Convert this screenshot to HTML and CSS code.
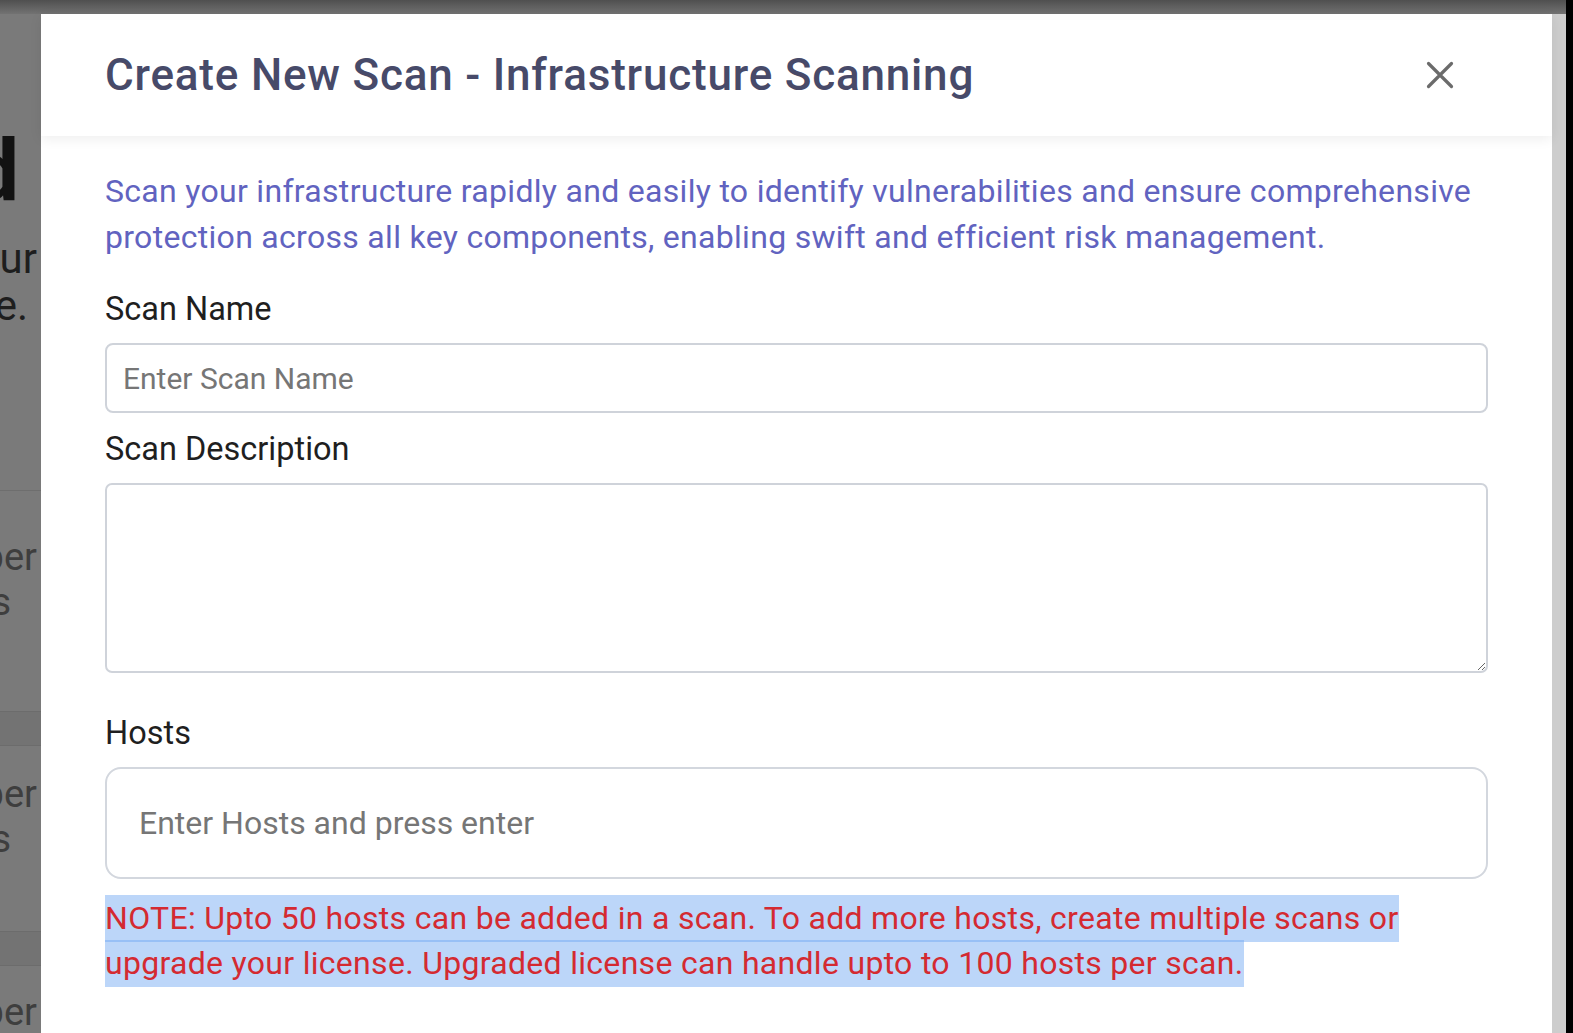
FILE: index.html
```html
<!DOCTYPE html>
<html lang="en">
<head>
<meta charset="utf-8">
<title>Create New Scan</title>
<link rel="stylesheet" href="styles.css">
</head>
<body>
<div class="screen">
  <div class="topbar"></div>
  <div class="main">
    <aside class="peek">
      <div class="peek-title"><span>Dashboard</span></div>
      <div class="peek-line peek-line-1"><span>Manage all your</span></div>
      <div class="peek-line peek-line-2"><span>scans in one place.</span></div>
      <div class="peek-spacer"></div>
      <div class="peek-row peek-row-first">
        <div class="peek-cell peek-cell-a"><span>Super</span></div>
        <div class="peek-cell peek-cell-b"><span>Hosts</span></div>
      </div>
      <div class="peek-band"></div>
      <div class="peek-row">
        <div class="peek-cell peek-cell-a"><span>Super</span></div>
        <div class="peek-cell peek-cell-b"><span>Hosts</span></div>
      </div>
      <div class="peek-band"></div>
      <div class="peek-row peek-row-last">
        <div class="peek-cell peek-cell-a"><span>Super</span></div>
      </div>
    </aside>

    <section class="modal">
      <header class="modal-header">
        <h2 class="modal-title">Create New Scan - Infrastructure Scanning</h2>
        <button class="close-btn" type="button" aria-label="Close">
          <svg viewBox="0 0 28 28" width="28" height="28" aria-hidden="true">
            <path d="M2.5 2.5 L25.5 25.5 M25.5 2.5 L2.5 25.5" fill="none" stroke="#6b6b6b" stroke-width="3.2" stroke-linecap="round"/>
          </svg>
        </button>
      </header>
      <div class="modal-body">
        <p class="desc">Scan your infrastructure rapidly and easily to identify vulnerabilities and ensure comprehensive protection across all key components, enabling swift and efficient risk management.</p>

        <label class="field-label" for="scan-name">Scan Name</label>
        <input class="text-input" id="scan-name" type="text" placeholder="Enter Scan Name">

        <label class="field-label" for="scan-desc">Scan Description</label>
        <textarea class="text-area" id="scan-desc"></textarea>

        <label class="field-label" for="hosts">Hosts</label>
        <input class="hosts-input" id="hosts" type="text" placeholder="Enter Hosts and press enter">

        <p class="note"><span class="note-sel">NOTE: Upto 50 hosts can be added in a scan. To add more hosts, create multiple scans or upgrade your license. Upgraded license can handle upto to 100 hosts per scan.</span></p>
      </div>
    </section>

    <div class="scrollbar"></div>
    <div class="edge"></div>
  </div>
</div>
</body>
</html>
```

FILE: styles.css
```css
* {
  box-sizing: border-box;
}

html, body {
  margin: 0;
  padding: 0;
  height: 100%;
  overflow: hidden;
}

body {
  font-family: Roboto, "Liberation Sans", Arial, sans-serif;
  background: #787878;
}

.screen {
  display: flex;
  flex-direction: column;
  height: 100vh;
}

.topbar {
  height: 14px;
  flex: 0 0 14px;
  background: linear-gradient(to bottom, #4f4f4f, #727272);
  margin-right: 7px;
}

.main {
  flex: 1;
  display: flex;
  min-height: 0;
}

/* ---------- page peeking out behind the modal ---------- */
.peek {
  width: 41px;
  flex: 0 0 41px;
  overflow: hidden;
  background: #7a7a7a;
  display: flex;
  flex-direction: column;
}

.peek-title,
.peek-line,
.peek-cell {
  display: flex;
  justify-content: flex-end;
  white-space: nowrap;
}

.peek-title {
  margin-top: 107px;
  font-size: 85px;
  line-height: 100px;
  font-weight: 700;
  color: #121212;
  padding-right: 22px;
}

.peek-line {
  font-size: 42px;
  line-height: 47px;
  color: #1e1e1e;
}

.peek-line-1 {
  margin-top: 14px;
  padding-right: 4px;
}

.peek-line-2 {
  padding-right: 13px;
}

.peek-spacer {
  height: 162px;
  flex: 0 0 162px;
  border-bottom: 1px solid #6e6e6e;
}

.peek-row {
  padding-top: 26px;
  height: 185px;
  flex: 0 0 185px;
  font-size: 38px;
  line-height: 45px;
  color: #3e3e3e;
}

.peek-row-first {
  padding-top: 44px;
  height: 220px;
  flex: 0 0 220px;
}

.peek-row-last {
  padding-top: 24px;
}

.peek-cell-a {
  padding-right: 4px;
}

.peek-cell-b {
  padding-right: 30px;
}

.peek-band {
  height: 35px;
  flex: 0 0 35px;
  background: #737373;
  border-top: 1px solid #6c6c6c;
  border-bottom: 1px solid #6c6c6c;
}

/* ---------- modal ---------- */
.modal {
  flex: 1;
  min-width: 0;
  background: #ffffff;
  display: flex;
  flex-direction: column;
}

.modal-header {
  height: 122px;
  flex: 0 0 122px;
  display: flex;
  align-items: center;
  justify-content: space-between;
  padding: 0 88px 0 64px;
  background: #ffffff;
  box-shadow: 0 3px 12px rgba(0, 0, 0, 0.07);
  position: relative;
  z-index: 1;
}

.modal-title {
  margin: 0;
  font-size: 44px;
  font-weight: 500;
  letter-spacing: 0.8px;
  color: #474a69;
}

.close-btn {
  width: 48px;
  height: 48px;
  padding: 0;
  border: 0;
  background: transparent;
  display: flex;
  align-items: center;
  justify-content: center;
  cursor: pointer;
}

.modal-body {
  padding: 32px 64px 0 64px;
  display: flex;
  flex-direction: column;
}

.desc {
  margin: 0;
  font-size: 32px;
  line-height: 46px;
  letter-spacing: 0.3px;
  color: #6163c0;
}

.field-label {
  display: block;
  margin: 29px 0 14px;
  font-size: 32.5px;
  line-height: 40px;
  color: #1f1f1f;
}

.text-input {
  display: block;
  width: 100%;
  height: 70px;
  margin: 0 0 16px;
  padding: 0 16px;
  border: 2px solid #cfd3da;
  border-radius: 8px;
  font-family: inherit;
  font-size: 30px;
  color: #222;
  background: #fff;
  outline: none;
}

.text-input + .field-label {
  margin-top: 0;
}

.text-area {
  display: block;
  width: 100%;
  height: 190px;
  margin: 0 0 40px;
  padding: 12px 16px;
  border: 2px solid #cfd3da;
  border-radius: 7px;
  font-family: inherit;
  font-size: 30px;
  color: #222;
  background: #fff;
  resize: vertical;
  outline: none;
}

.text-area + .field-label {
  margin-top: 0;
}

.hosts-input {
  display: block;
  width: 100%;
  height: 112px;
  margin: 0;
  padding: 0 32px;
  border: 2px solid #d3d7de;
  border-radius: 16px;
  font-family: inherit;
  font-size: 32px;
  color: #222;
  background: #fff;
  outline: none;
}

::placeholder {
  color: #767676;
  opacity: 1;
}

.note {
  margin: 17px 0 0;
  font-size: 32px;
  line-height: 45px;
  letter-spacing: 0.3px;
  color: #d42a31;
}

.note-sel {
  background: rgba(110, 165, 242, 0.46);
  padding: 4px 0 5px;
}

/* ---------- right edge ---------- */
.scrollbar {
  width: 14px;
  flex: 0 0 14px;
  background: #cdcdcd;
}

.edge {
  width: 7px;
  flex: 0 0 7px;
  background: #000;
  margin-top: -14px;
}
```
